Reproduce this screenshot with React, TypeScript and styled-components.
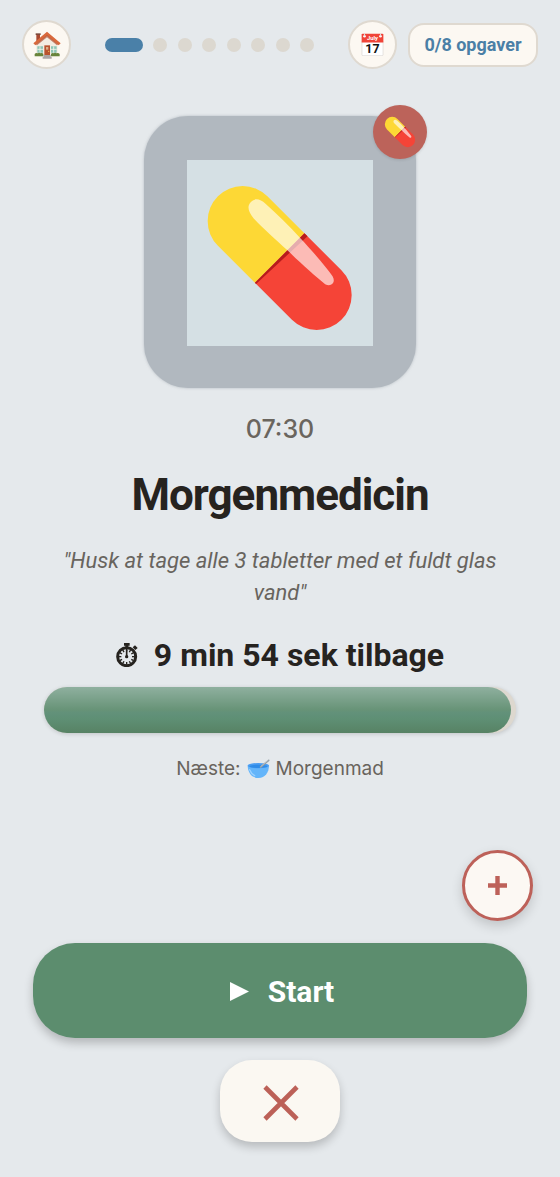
import React from "react";
import styled, { createGlobalStyle } from "styled-components";

const GlobalStyle = createGlobalStyle`
  * { box-sizing: border-box; }
  body {
    margin: 0;
    background: #e5e9ec;
    font-family: Roboto, "Liberation Sans", sans-serif;
    color: #26231f;
  }
  button { font: inherit; padding: 0; cursor: pointer; }
  h1, p { margin: 0; }
`;

const Page = styled.div`
  min-height: 100vh;
  display: flex;
  flex-direction: column;
`;

const Header = styled.header`
  display: flex;
  align-items: center;
  padding: 20px 22px 0;
`;

const RoundButton = styled.button`
  flex: none;
  display: grid;
  place-items: center;
  width: 49px;
  height: 49px;
  border-radius: 50%;
  border: 2px solid #dfd9d0;
  background: #fcf8f2;
`;

const Steps = styled.ol`
  flex: 0 1 210px;
  display: flex;
  justify-content: space-between;
  margin: 0 auto;
  padding: 0;
  list-style: none;
`;

const Step = styled.li<{ $active?: boolean }>`
  width: ${(p) => (p.$active ? 38 : 14)}px;
  height: 14px;
  border-radius: 7px;
  background: ${(p) => (p.$active ? "#4a80a8" : "#dcd8d0")};
`;

const Counter = styled.span`
  flex: none;
  display: grid;
  place-items: center;
  width: 130px;
  height: 44px;
  margin-left: 11px;
  border: 2px solid #dfd9d0;
  border-radius: 16px;
  background: #fcf8f2;
  color: #4a7fa6;
  font-size: 18px;
  font-weight: 700;
`;

const Main = styled.main`
  display: flex;
  flex-direction: column;
  align-items: center;
  padding: 47px 44px 0;
  text-align: center;
`;

const Card = styled.div`
  position: relative;
  display: grid;
  place-items: center;
  width: 272px;
  height: 272px;
  padding-top: 2px;
  border-radius: 44px;
  background: #b1b8bf;
  box-shadow: 0 0 3px rgba(150, 158, 166, 0.6);
`;

const Picture = styled.div`
  width: 186px;
  height: 186px;
  background: #d5e0e4;
`;

const Badge = styled.span`
  position: absolute;
  top: -11px;
  right: -11px;
  display: grid;
  place-items: center;
  width: 54px;
  height: 54px;
  border-radius: 50%;
  background: #bc635a;
  box-shadow: 0 1px 3px rgba(0, 0, 0, 0.12);
`;

const Time = styled.time`
  margin-top: 25px;
  font-family: Inter, "Liberation Sans", sans-serif;
  font-size: 25px;
  line-height: 32px;
  font-weight: 500;
  color: #6a655e;
`;

const Title = styled.h1`
  margin-top: 24px;
  font-size: 44px;
  line-height: 52px;
  font-weight: 700;
  letter-spacing: -1px;
`;

const Note = styled.p`
  margin-top: 24px;
  font-size: 22px;
  line-height: 32px;
  font-style: italic;
  color: #68645e;
`;

const TimeLeft = styled.p`
  display: flex;
  align-items: center;
  gap: 16px;
  margin-top: 26px;
  font-size: 32px;
  line-height: 40px;
  font-weight: 700;
`;

const Track = styled.div`
  width: 100%;
  height: 46px;
  margin-top: 12px;
  border-radius: 23px;
  background: #ddd8cf;
  box-shadow: 0 1px 4px rgba(0, 0, 0, 0.16);
`;

const Fill = styled.div`
  height: 100%;
  border-radius: 23px;
  background: linear-gradient(#8fb09f 0%, #679377 50%, #62917a 56%, #5e8f74 70%, #578264 100%);
`;

const Next = styled.p`
  display: flex;
  align-items: center;
  gap: 6px;
  margin-top: 22px;
  font-family: Inter, "Liberation Sans", sans-serif;
  font-size: 19px;
  line-height: 28px;
  color: #69645d;
`;

const Actions = styled.footer`
  display: flex;
  flex-direction: column;
  align-items: center;
  gap: 22px;
  margin-top: auto;
  padding: 0 33px 35px;
`;

const AddButton = styled.button`
  align-self: flex-end;
  display: grid;
  place-items: center;
  width: 71px;
  height: 71px;
  margin-right: -6px;
  border: 3px solid #bd6159;
  border-radius: 50%;
  background: #fcf8f3;
  box-shadow: 0 5px 12px rgba(0, 0, 0, 0.16);
`;

const StartButton = styled.button`
  display: flex;
  align-items: center;
  justify-content: center;
  gap: 19px;
  width: 100%;
  height: 95px;
  padding: 2px 0 0 4px;
  border: 0;
  border-radius: 42px;
  background: #5c8d6e;
  color: #fff;
  font-size: 30px;
  font-weight: 700;
  box-shadow: 0 5px 10px rgba(0, 0, 0, 0.22);
`;

const CloseButton = styled.button`
  display: grid;
  place-items: center;
  width: 120px;
  height: 82px;
  padding: 4px 0 0 2px;
  border: 0;
  border-radius: 32px;
  background: #fbf8f2;
  box-shadow: 0 5px 10px rgba(0, 0, 0, 0.2);
`;

const Drawing = styled.svg`
  display: block;
  flex: none;
`;

const CalendarText = styled.text`
  font-family: Roboto, "Liberation Sans", sans-serif;
  font-weight: 700;
  text-anchor: middle;
`;

function PillShape() {
  return (
    <g transform="translate(278 294) rotate(45)">
      <path d="M0-105H-157A105 105 0 0 0-157 105H0Z" fill="#fdd835" />
      <path d="M0-105H157A105 105 0 0 1 157 105H0Z" fill="#f54437" />
      <path d="M0-105H13L5 105H0Z" fill="#b71c1c" />
      <path
        d="M-180-58C-180-76-166-84-145-85C-95-88-45-88 0-86C60-84 125-79 152-73C171-68 172-47 152-41C115-37 50-33 0-33C-50-30-100-28-140-29C-164-31-180-40-180-58Z"
        fill="#fff"
        opacity="0.64"
      />
    </g>
  );
}

function House() {
  return (
    <Drawing width="28" height="28" viewBox="0 0 84 84" aria-hidden="true">
      <path d="M10 9h11v24H10z" fill="#a8482f" />
      <path d="M8 7h15v5H8z" fill="#7d4a3c" />
      <path d="M42 8L74 38V76H9V38Z" fill="#f3ede2" />
      <path d="M42 2L83 37L77 43L42 14L7 43L1 37Z" fill="#d9693c" />
      <path d="M42 12L75 40L72 43L42 19L12 43L9 40Z" fill="#b04f31" opacity=".7" />
      <path d="M13 46h17v19H13zM54 46h17v19H54z" fill="#8dc5b5" />
      <path d="M21 46v19M13 55h17M62 46v19M54 55h17" stroke="#f5f3e9" strokeWidth="2.5" />
      <path d="M34 43h17v31H34z" fill="#b9532f" />
      <path d="M39 48h7v8h-7z" fill="#dcae89" />
      <circle cx="47" cy="61" r="2" fill="#f0c25a" />
      <path d="M5 76V69q4-5 9-2q5-3 9 0q5-2 8 2v7zM54 76v-7q4-5 8-2q5-3 9 0q5-2 9 2v7z" fill="#68843b" />
      <path d="M32 72h21v5h3v6H29v-6h3z" fill="#aaa4a4" />
    </Drawing>
  );
}

function Calendar() {
  return (
    <Drawing width="23" height="23" viewBox="0 0 72 72" role="img" aria-label="Kalender">
      <path d="M3 26H69V68Q69 71 66 71H6Q3 71 3 68Z" fill="#fff" stroke="#d7d5d2" strokeWidth="2" />
      <path d="M2 5Q2 2 5 2H67Q70 2 70 5V30H2Z" fill="#f04438" />
      <circle cx="11" cy="10" r="4" fill="#fff" />
      <circle cx="61" cy="10" r="4" fill="#fff" />
      <path d="M11 1v9M61 1v9" stroke="#dedede" strokeWidth="3" />
      <CalendarText x="36" y="23" fontSize="18" fill="#fff">July</CalendarText>
      <CalendarText x="36" y="64" fontSize="39" fill="#111">17</CalendarText>
    </Drawing>
  );
}

function Stopwatch() {
  const ticks = Array.from({ length: 12 }, (_, i) => i * 30);
  return (
    <Drawing width="22" height="24" viewBox="0 0 66 72" aria-hidden="true">
      <circle cx="32" cy="41" r="27" fill="none" stroke="#26231f" strokeWidth="9" />
      <path d="M24 0h17v8h-4v8h-9V8h-4zM50 13l7-6l8 8l-7 6z" fill="#26231f" />
      {ticks.map((a) => (
        <path key={a} d="M32 17v8" stroke="#26231f" strokeWidth="4" transform={`rotate(${a} 32 41)`} />
      ))}
      <path d="M32 20v22" stroke="#26231f" strokeWidth="5" />
      <circle cx="32" cy="41" r="5" fill="#26231f" />
    </Drawing>
  );
}

function Bowl() {
  return (
    <Drawing width="23" height="20" viewBox="0 0 69 60" aria-hidden="true">
      <path d="M2 19C2 40 13 57 34 57S66 40 66 19Z" fill="#64b5fa" />
      <ellipse cx="34" cy="20" rx="32" ry="8" fill="#4a9df2" />
      <ellipse cx="34" cy="22" rx="27" ry="5" fill="#2f8ce8" />
      <path d="M8 32Q13 45 23 50" fill="none" stroke="#9bd1ff" strokeWidth="4" strokeLinecap="round" />
      <path d="M41 24L65 4" stroke="#929ca3" strokeWidth="5" strokeLinecap="round" />
      <path d="M42 22L64 3" stroke="#cbd1d4" strokeWidth="2" strokeLinecap="round" />
    </Drawing>
  );
}

const totalSteps = 8;
const remaining = 99;

export default function App() {
  return (
    <Page>
      <GlobalStyle />
      <Header>
        <RoundButton aria-label="Hjem">
          <House />
        </RoundButton>
        <Steps>
          {Array.from({ length: totalSteps }, (_, i) => (
            <Step key={i} $active={i === 0} />
          ))}
        </Steps>
        <RoundButton aria-label="Kalender">
          <Calendar />
        </RoundButton>
        <Counter>0/8 opgaver</Counter>
      </Header>

      <Main>
        <Card>
          <Picture>
            <Drawing width="186" height="186" viewBox="0 0 558 558" aria-hidden="true">
              <PillShape />
            </Drawing>
          </Picture>
          <Badge>
            <Drawing width="32" height="32" viewBox="50 66 456 456" aria-hidden="true">
              <PillShape />
            </Drawing>
          </Badge>
        </Card>
        <Time>07:30</Time>
        <Title>Morgenmedicin</Title>
        <Note>"Husk at tage alle 3 tabletter med et fuldt glas vand"</Note>
        <TimeLeft>
          <Stopwatch />
          9 min 54 sek tilbage
        </TimeLeft>
        <Track role="progressbar" aria-valuenow={remaining} aria-label="Tid tilbage">
          <Fill style={{ width: `${remaining}%` }} />
        </Track>
        <Next>
          <span>Næste:</span>
          <Bowl />
          <span>Morgenmad</span>
        </Next>
      </Main>

      <Actions>
        <AddButton aria-label="Tilføj">
          <Drawing width="19" height="19" viewBox="0 0 19 19" aria-hidden="true">
            <path d="M9.5 0v19M0 9.5h19" stroke="#bd6159" strokeWidth="4.4" />
          </Drawing>
        </AddButton>
        <StartButton>
          <Drawing width="19" height="19" viewBox="0 0 19 19" aria-hidden="true">
            <path d="M0 0L19 9.5L0 19Z" fill="#fff" />
          </Drawing>
          Start
        </StartButton>
        <CloseButton aria-label="Luk">
          <Drawing width="36" height="36" viewBox="0 0 36 36" aria-hidden="true">
            <path d="M2 2L34 34M34 2L2 34" stroke="#bc6158" strokeWidth="4.6" />
          </Drawing>
        </CloseButton>
      </Actions>
    </Page>
  );
}
